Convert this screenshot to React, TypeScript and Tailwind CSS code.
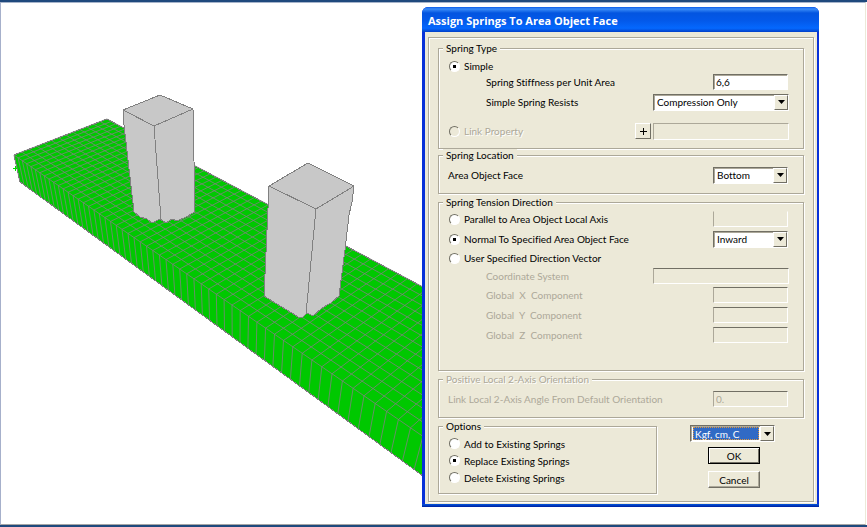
import type { ReactNode } from 'react';

type Point = [number, number];

// Vanishing points of the slab's length, width and depth.
const LENGTH_VP: Point = [-531, -220];
const WIDTH_VP: Point = [1260, -327];
const DEPTH_VP: Point = [235, 1152];
const ORIGIN: Point = [14, 155];

const LENGTH_CELLS = 60;
const WIDTH_CELLS = 13;

function project(length: number, width: number, depth = 0): Point {
  const a = -0.00752 * length;
  const b = 0.0062 * width;
  const c = 0.0278 * depth;
  const w = 1 + a + b + c;

  return [
    (ORIGIN[0] + a * LENGTH_VP[0] + b * WIDTH_VP[0] + c * DEPTH_VP[0]) / w,
    (ORIGIN[1] + a * LENGTH_VP[1] + b * WIDTH_VP[1] + c * DEPTH_VP[1]) / w,
  ];
}

function toPath(points: Point[]) {
  return points
    .map(([x, y], i) => `${i === 0 ? 'M' : 'L'}${x.toFixed(1)} ${y.toFixed(1)}`)
    .join('');
}

function range(count: number) {
  return Array.from({ length: count + 1 }, (_, i) => i);
}

function SlabModel() {
  const outline = toPath([
    project(0, 0),
    project(0, WIDTH_CELLS),
    project(LENGTH_CELLS, WIDTH_CELLS),
    project(LENGTH_CELLS, 0),
    project(LENGTH_CELLS, 0, 1),
    project(0, 0, 1),
  ]);

  const mesh = [
    ...range(LENGTH_CELLS).map((n) =>
      toPath([project(n, 0, 1), project(n, 0), project(n, WIDTH_CELLS)]),
    ),
    ...range(WIDTH_CELLS).map((m) =>
      toPath([project(0, m), project(LENGTH_CELLS, m)]),
    ),
  ].join('');

  return (
    <svg
      viewBox="1 3 421 521"
      className="block h-auto w-full"
      role="img"
      aria-label="Meshed slab with two columns"
      shapeRendering="crispEdges"
      strokeLinejoin="round"
    >
      <path d={`${outline}Z`} fill="#00c800" stroke="#808080" />
      <path d={mesh} fill="none" stroke="#808080" strokeWidth="0.8" />
      <path d="M13 168.5h4M15.5 166v5" stroke="#00e000" />

      <g fill="#c8c8c8" stroke="#808080">
        <path
          stroke="none"
          d="M160 95L193 109L195 212L186 217L177 221L172 219L166 223L160 219L152 223L147 219L140 217L134 212L124 125L123 110Z"
        />
        <path
          fill="none"
          d="M134 212L124 125L123 110L160 95L193 109L195 212M123 110L154 126L193 109M154 126L161 219"
        />
        <path
          fill="none"
          d="M134 212L140 217L147 219L152 223L160 219L166 223L172 219L177 221L186 217L195 212"
        />
        <path
          stroke="none"
          d="M308 163L354 186L352 202L349 215L345 250L339 296L331 303L322 308L313 316L307 313L303 317L298 317L292 313L280 306L264 296L269 186Z"
        />
        <path
          fill="none"
          d="M264 296L269 186L308 163L354 186L352 202L349 215L345 250L339 296M269 186L316 209L354 186M316 209L306 314"
        />
        <path
          fill="none"
          d="M264 296L280 306L292 313L298 317L303 317L307 313L313 316L322 308L331 303L339 296"
        />
      </g>
    </svg>
  );
}

interface GroupProps {
  title: string;
  disabled?: boolean;
  className?: string;
  children: ReactNode;
}

function Group({ title, disabled, className = '', children }: GroupProps) {
  return (
    <fieldset
      className={`min-w-0 border border-[#aca899] pr-3.5 pl-1 shadow-[1px_1px_0_#fff,inset_1px_1px_0_#fff] ${className}`}
    >
      <legend
        className={`bg-[#ece9d8] px-[3px] leading-3 ${
          disabled ? 'text-[#aca899] [text-shadow:1px_1px_0_#fff]' : ''
        }`}
      >
        {title}
      </legend>
      {children}
    </fieldset>
  );
}

interface RadioProps {
  name: string;
  label: string;
  checked?: boolean;
  disabled?: boolean;
}

function Radio({ name, label, checked, disabled }: RadioProps) {
  return (
    <label
      className={`flex items-center gap-1 pl-1.5 ${
        disabled ? 'text-[#aca899] [text-shadow:1px_1px_0_#fff]' : ''
      }`}
    >
      <input
        type="radio"
        name={name}
        defaultChecked={checked}
        disabled={disabled}
        className="size-[11px] appearance-none rounded-full border border-t-[#716f64] border-r-white border-b-white border-l-[#716f64] bg-white checked:bg-[radial-gradient(circle,#000_0_1.5px,#fff_2px)] disabled:bg-[#ece9d8]"
      />
      {label}
    </label>
  );
}

interface FieldProps {
  id: string;
  label: string;
  wide?: boolean;
}

const sunken =
  'border border-t-[#716f64] border-r-white border-b-white border-l-[#716f64] shadow-[inset_1px_1px_0_#aca899]';

function DisabledField({ id, label, wide }: FieldProps) {
  return (
    <div
      className={`flex items-center justify-between pl-[43px] text-[#aca899] ${
        wide ? 'h-[18px]' : 'h-5'
      }`}
    >
      <label htmlFor={id} className="whitespace-pre">
        {label}
      </label>
      <input
        id={id}
        disabled
        className={`h-4 border border-t-[#716f64] border-r-white border-b-white border-l-[#aca899] ${
          wide ? 'w-[136px]' : 'mr-px w-[75px]'
        }`}
      />
    </div>
  );
}

interface DropDownProps {
  id?: string;
  label?: string;
  options: string[];
  highlighted?: boolean;
  className: string;
}

function DropDown({
  id,
  label,
  options,
  highlighted,
  className,
}: DropDownProps) {
  return (
    <div className={`relative h-[17px] bg-white p-px ${sunken} ${className}`}>
      <select
        id={id}
        aria-label={label}
        className={`block h-[13px] appearance-none pl-0.5 leading-3 ${
          highlighted
            ? 'ml-px w-[66px] bg-[#316ac5] text-white outline-1 -outline-offset-1 outline-[#e0963a] outline-dotted'
            : 'w-full'
        }`}
      >
        {options.map((option) => (
          <option key={option}>{option}</option>
        ))}
      </select>
      <span className="pointer-events-none absolute inset-y-0 right-0 flex w-3.5 items-center justify-center border border-t-white border-r-[#716f64] border-b-[#716f64] border-l-white bg-[#ece9d8]">
        <svg viewBox="0 0 7 4" className="h-1 w-[7px]">
          <path d="M0 0H7L3.5 4Z" />
        </svg>
      </span>
    </div>
  );
}

function AssignSpringsDialog() {
  return (
    <form
      role="dialog"
      aria-labelledby="dialog-title"
      onSubmit={(event) => event.preventDefault()}
      className="mt-1 mr-[46px] w-[397px] shrink-0 self-start rounded-t-md bg-[#0831d9]"
    >
      <h1
        id="dialog-title"
        className="h-[25px] rounded-t-md bg-linear-[to_bottom,#0a5be8,#3a8cf8_8%,#0355e0_24%,#0359ea_55%,#0468fe_85%,#0340c8] pl-1.5 font-['Open_Sans',sans-serif] text-[11px] leading-7 font-bold text-white"
      >
        Assign Springs To Area Object Face
      </h1>

      <div className="mr-0.5 ml-[3px] bg-[#ece9d8] px-[3px] pt-[5px] pb-0.5">
        <div className="border border-[#aca899] px-[9px] pt-1 pb-[7px] shadow-[1px_1px_0_#fff,inset_1px_1px_0_#fff]">
          <Group title="Spring Type" className="pb-2">
            <div className="flex h-5 items-center pt-1">
              <Radio name="type" label="Simple" checked />
            </div>
            <div className="flex h-4 items-center justify-between pl-[43px]">
              <label htmlFor="stiffness">Spring Stiffness per Unit Area</label>
              <input
                id="stiffness"
                defaultValue="6,6"
                className={`mr-px h-4 w-[75px] bg-white px-0.5 ${sunken}`}
              />
            </div>
            <div className="flex h-6 items-center justify-between pl-[43px]">
              <label htmlFor="resists">Simple Spring Resists</label>
              <DropDown
                id="resists"
                options={['Compression Only', 'Tension Only']}
                className="w-[136px]"
              />
            </div>
            <div className="mt-2 flex h-[18px] items-center justify-between">
              <Radio name="type" label="Link Property" disabled />
              <div className="flex items-center gap-0.5">
                <button
                  type="button"
                  className="flex size-4 items-center justify-center border border-t-white border-r-[#716f64] border-b-[#716f64] border-l-white"
                  aria-label="Add link property"
                >
                  <svg viewBox="0 0 7 7" className="size-[7px]">
                    <path d="M3 0H4V3H7V4H4V7H3V4H0V3H3Z" />
                  </svg>
                </button>
                <input
                  aria-label="Link property name"
                  disabled
                  className="h-[17px] w-[136px] border border-t-[#aca899] border-r-white border-b-white border-l-[#aca899]"
                />
              </div>
            </div>
          </Group>

          <Group title="Spring Location" className="pt-1 pb-2">
            <div className="flex h-5 items-center justify-between pl-[5px]">
              <label htmlFor="face">Area Object Face</label>
              <DropDown
                id="face"
                options={['Bottom', 'Top']}
                className="mr-px w-[75px]"
              />
            </div>
          </Group>

          <Group
            title="Spring Tension Direction"
            className="mt-0.5 pt-px pb-[25px]"
          >
            <div className="flex h-5 items-center justify-between">
              <Radio
                name="direction"
                label="Parallel to Area Object Local Axis"
              />
              <input
                aria-label="Local axis"
                disabled
                className="mr-px h-4 w-[75px] border border-t-[#ece9d8] border-r-white border-b-white border-l-[#aca899]"
              />
            </div>
            <div className="flex h-5 items-center justify-between">
              <Radio
                name="direction"
                label="Normal To Specified Area Object Face"
                checked
              />
              <DropDown
                label="Normal direction"
                options={['Inward', 'Outward']}
                className="mr-px w-[75px]"
              />
            </div>
            <div className="flex h-[18px] items-center">
              <Radio name="direction" label="User Specified Direction Vector" />
            </div>
            <DisabledField id="system" label="Coordinate System" wide />
            <DisabledField id="global-x" label="Global  X  Component" />
            <DisabledField id="global-y" label="Global  Y  Component" />
            <DisabledField id="global-z" label="Global  Z  Component" />
          </Group>

          <Group
            title="Positive Local 2-Axis Orientation"
            disabled
            className="mt-0.5 pt-1 pb-2"
          >
            <div className="flex h-5 items-center justify-between pl-[5px] text-[#aca899]">
              <label htmlFor="angle">
                Link Local 2-Axis Angle From Default Orientation
              </label>
              <input
                id="angle"
                disabled
                defaultValue="0."
                className="mr-px h-4 w-[75px] border border-t-[#716f64] border-r-white border-b-white border-l-[#aca899] px-0.5"
              />
            </div>
          </Group>

          <div className="mt-0.5 flex justify-between">
            <Group title="Options" className="w-[219px] pt-[3px] pb-[7px]">
              <div className="flex h-[17px] items-center">
                <Radio name="option" label="Add to Existing Springs" />
              </div>
              <div className="flex h-[17px] items-center">
                <Radio
                  name="option"
                  label="Replace Existing Springs"
                  checked
                />
              </div>
              <div className="flex h-[17px] items-center">
                <Radio name="option" label="Delete Existing Springs" />
              </div>
            </Group>

            <div className="mr-[29px] flex flex-col items-start pt-[5px]">
              <DropDown
                label="Units"
                options={['Kgf, cm, C', 'KN, m, C']}
                highlighted
                className="w-[85px]"
              />
              <button
                type="submit"
                className="mt-[5px] ml-[18px] h-[17px] w-[52px] border border-black shadow-[inset_1px_1px_0_#fff,inset_-1px_-1px_0_#716f64]"
              >
                OK
              </button>
              <button
                type="button"
                className="mt-[7px] ml-[18px] h-[17px] w-[52px] border border-t-white border-r-[#716f64] border-b-[#716f64] border-l-white shadow-[inset_-1px_-1px_0_#aca899]"
              >
                Cancel
              </button>
            </div>
          </div>
        </div>
      </div>
      <div className="h-[3px] bg-linear-to-b from-[#0855dd] to-[#001ea0]" />
    </form>
  );
}

export default function App() {
  return (
    <main className="flex min-h-screen flex-col border-y-2 border-[#1f497d] bg-white font-[Lato,sans-serif] text-[10px] leading-3 text-black [font-variant-ligatures:none]">
      <div className="mr-px flex flex-1 border border-t-[#a6b4cb] border-r-[#ece9d8] border-b-[#a6a6a6] border-l-[#a6b0cb]">
        <div className="min-w-0 flex-1">
          <SlabModel />
        </div>
        <AssignSpringsDialog />
      </div>
    </main>
  );
}
